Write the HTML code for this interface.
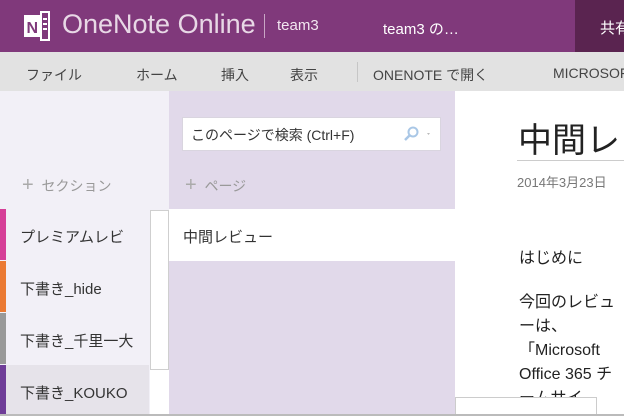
<!DOCTYPE html>
<html><head><meta charset="utf-8"><style>
*{margin:0;padding:0;box-sizing:border-box}
body{width:624px;height:416px;overflow:hidden;position:relative;font-family:"Liberation Sans","Noto Sans CJK JP",sans-serif;background:#fff}
.a{position:absolute;white-space:nowrap}
</style></head><body>
<div class="a" style="left:0;top:0;width:624px;height:52px;background:#80397b"></div>
<div class="a" style="left:575px;top:0;width:49px;height:52px;background:#5a2450;overflow:hidden"><div class="a" style="left:25px;top:17px;font-size:15px;color:#fff">共有</div></div>
<svg class="a" style="left:22px;top:10px" width="30" height="32" viewBox="0 0 30 32">
<rect x="2" y="5" width="17" height="22" fill="#fff"/>
<rect x="19" y="2" width="8" height="28" fill="none" stroke="#fff" stroke-width="2"/>
<rect x="21" y="8" width="4" height="2" fill="#fff"/><rect x="21" y="13" width="4" height="2" fill="#fff"/><rect x="21" y="18" width="4" height="2" fill="#fff"/>
<text x="4.5" y="23" font-family="Liberation Sans" font-weight="bold" font-size="16" fill="#80397b">N</text>
</svg>
<div class="a" style="left:62px;top:9px;font-size:27px;color:#e8d8e6">OneNote Online</div>
<div class="a" style="left:264px;top:14px;width:1px;height:24px;background:#c9a6c5"></div>
<div class="a" style="left:277px;top:17px;font-size:15px;color:#f2e6f0">team3</div>
<div class="a" style="left:383px;top:18px;font-size:15px;color:#fff">team3 の…</div>
<div class="a" style="left:0;top:52px;width:624px;height:39px;background:#e2e2e2;overflow:hidden">
<div class="a" style="left:26px;top:13px;font-size:14px;color:#444">ファイル</div>
<div class="a" style="left:136px;top:13px;font-size:14px;color:#444">ホーム</div>
<div class="a" style="left:221px;top:13px;font-size:14px;color:#444">挿入</div>
<div class="a" style="left:290px;top:13px;font-size:14px;color:#444">表示</div>
<div class="a" style="left:357px;top:10px;width:1px;height:20px;background:#c6c6c6"></div>
<div class="a" style="left:373px;top:13px;font-size:14px;color:#444">ONENOTE で開く</div>
<div class="a" style="left:553px;top:13px;font-size:14px;color:#444">MICROSOFT</div>
</div>
<div class="a" style="left:0;top:91px;width:169px;height:325px;background:#f2f0f7"></div>
<div class="a" style="left:169px;top:91px;width:286px;height:325px;background:#e1d9ea"></div>
<div class="a" style="left:182px;top:117px;width:259px;height:34px;background:#fff;border:1px solid #d9d5df"></div>
<div class="a" style="left:191px;top:125px;font-size:14px;color:#333">このページで検索 (Ctrl+F)</div>
<svg class="a" style="left:402px;top:125px" width="30" height="18"><circle cx="11" cy="7" r="4.5" fill="none" stroke="#a9c7e6" stroke-width="2"/><line x1="8" y1="10" x2="3" y2="15" stroke="#a9c7e6" stroke-width="2.5"/><path d="M25 8l3 0l-1.5 2z" fill="#bbb"/></svg>
<div class="a" style="left:22px;top:176px;font-size:14px;color:#999"><span style="font-size:20px;color:#aaa;line-height:16px">+</span>&nbsp;&nbsp;セクション</div>
<div class="a" style="left:185px;top:176px;font-size:14px;color:#999"><span style="font-size:20px;color:#aaa;line-height:16px">+</span>&nbsp;&nbsp;ページ</div>
<div class="a" style="left:0;top:209px;width:6px;height:51px;background:#d63f98"></div>
<div class="a" style="left:0;top:261px;width:6px;height:51px;background:#eb7a33"></div>
<div class="a" style="left:0;top:313px;width:6px;height:51px;background:#999"></div>
<div class="a" style="left:0;top:365px;width:149px;height:51px;background:#e6e3ea"></div>
<div class="a" style="left:0;top:365px;width:6px;height:51px;background:#6f3d98"></div>
<div class="a" style="left:20px;top:226px;font-size:15px;color:#333">プレミアムレビ</div>
<div class="a" style="left:20px;top:278px;font-size:15px;color:#333">下書き_hide</div>
<div class="a" style="left:20px;top:330px;width:118px;overflow:hidden;font-size:15px;color:#333">下書き_千里一大</div>
<div class="a" style="left:20px;top:382px;width:118px;overflow:hidden;font-size:15px;color:#333">下書き_KOUKO</div>
<div class="a" style="left:150px;top:210px;width:19px;height:160px;background:#fff;border:1px solid #cfcfcf"></div>
<div class="a" style="left:150px;top:370px;width:19px;height:46px;background:#fff"></div>
<div class="a" style="left:169px;top:209px;width:286px;height:52px;background:#fff"></div>
<div class="a" style="left:183px;top:226px;font-size:15px;color:#333">中間レビュー</div>
<div class="a" style="left:455px;top:91px;width:169px;height:325px;overflow:hidden">
<div class="a" style="left:63px;top:22px;font-size:34px;color:#222">中間レビュー</div>
<div class="a" style="left:62px;top:69px;width:120px;height:1px;background:#ccc"></div>
<div class="a" style="left:62px;top:81px;font-size:13px;color:#777">2014年3月23日</div>
<div class="a" style="left:64px;top:153px;font-size:16px;color:#222">はじめに</div>
<div class="a" style="left:64px;top:200px;font-size:16px;line-height:24px;color:#222">今回のレビュ<br>ーは、<br>「Microsoft<br>Office 365 チ<br>ームサイ</div>
</div>
<div class="a" style="left:455px;top:397px;width:142px;height:19px;background:#fff;border:1px solid #ccc"></div>
<div class="a" style="left:0;top:414px;width:624px;height:2px;background:#bbb"></div>
</body></html>
